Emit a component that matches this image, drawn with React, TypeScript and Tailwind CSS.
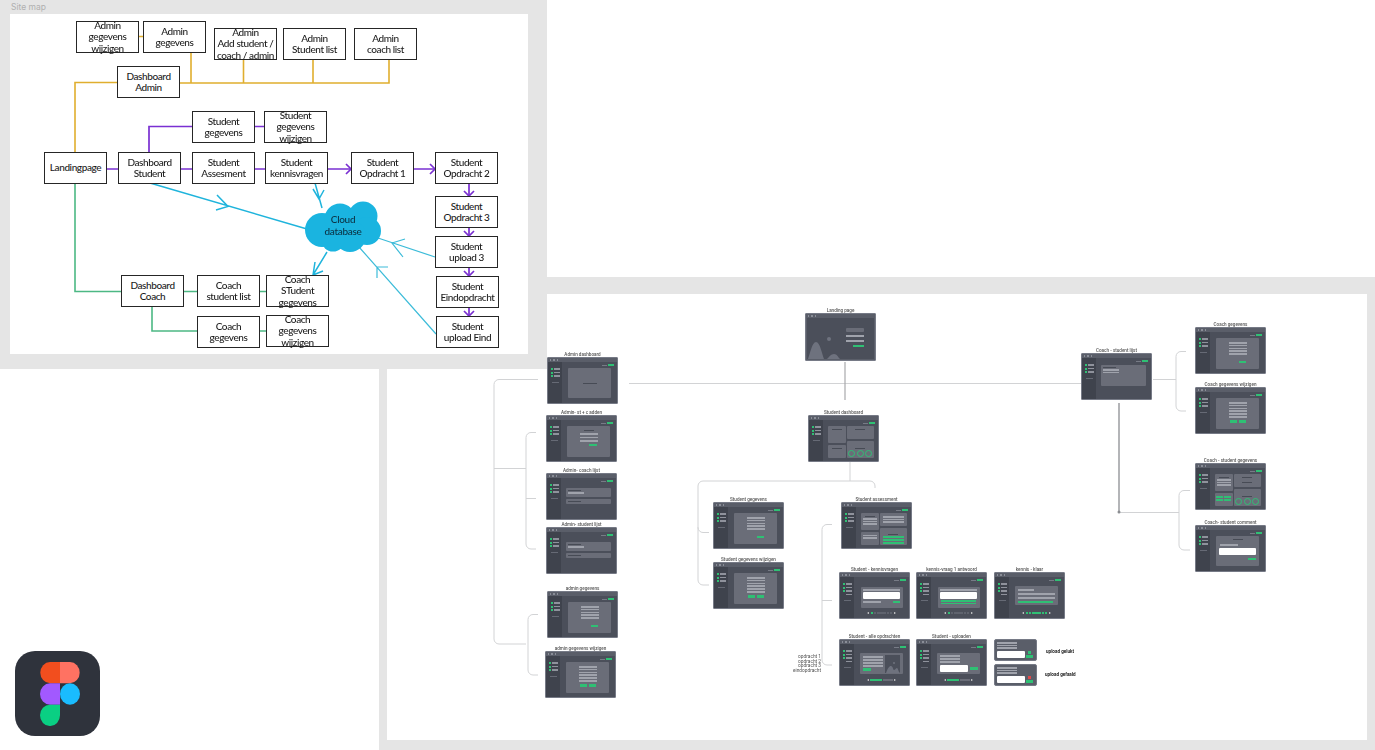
import React from "react";

const sans = "font-['Lato','Open_Sans',sans-serif]";

const boxes: { t: string[]; p: string }[] = [
  { t: ["Admin", "gegevens", "wijzigen"], p: "left-[76px] top-[21px]" },
  { t: ["Admin", "gegevens"], p: "left-[143px] top-[21px]" },
  { t: ["Admin", "Add student /", "coach / admin"], p: "left-[214px] top-[28px]" },
  { t: ["Admin", "Student list"], p: "left-[283px] top-[28px]" },
  { t: ["Admin", "coach list"], p: "left-[354px] top-[28px]" },
  { t: ["Dashboard", "Admin"], p: "left-[117px] top-[66px]" },
  { t: ["Student", "gegevens"], p: "left-[192px] top-[111px]" },
  { t: ["Student", "gegevens", "wijzigen"], p: "left-[264px] top-[111px]" },
  { t: ["Landingpage"], p: "left-[44px] top-[152px]" },
  { t: ["Dashboard", "Student"], p: "left-[118px] top-[152px]" },
  { t: ["Student", "Assesment"], p: "left-[192px] top-[152px]" },
  { t: ["Student", "kennisvragen"], p: "left-[265px] top-[152px]" },
  { t: ["Student", "Opdracht 1"], p: "left-[351px] top-[152px]" },
  { t: ["Student", "Opdracht 2"], p: "left-[435px] top-[152px]" },
  { t: ["Student", "Opdracht 3"], p: "left-[435px] top-[196px]" },
  { t: ["Student", "upload 3"], p: "left-[435px] top-[236px]" },
  { t: ["Student", "Eindopdracht"], p: "left-[436px] top-[276px]" },
  { t: ["Student", "upload Eind"], p: "left-[436px] top-[316px]" },
  { t: ["Dashboard", "Coach"], p: "left-[121px] top-[275px]" },
  { t: ["Coach", "student list"], p: "left-[197px] top-[275px]" },
  { t: ["Coach", "STudent", "gegevens"], p: "left-[266px] top-[275px]" },
  { t: ["Coach", "gegevens"], p: "left-[197px] top-[316px]" },
  { t: ["Coach", "gegevens", "wijzigen"], p: "left-[266px] top-[315px]" },
];

function Box({ t, p }: { t: string[]; p: string }) {
  return (
    <div
      className={`absolute ${p} w-[63px] h-[32px] border-[1.7px] border-[#262626] bg-white flex flex-col items-center justify-center text-[10px] leading-[11.3px] tracking-[-0.4px] font-medium text-[#1c1c1c] whitespace-nowrap ${sans}`}
    >
      {t.map((l) => (
        <span key={l}>{l}</span>
      ))}
    </div>
  );
}

/* primitives of the miniature screens */
const L = ({ c = "w-[18px]" }: { c?: string }) => <div className={`${c} h-[1.6px] bg-[#a0a3ac] shrink-0`} />;
const T = ({ c = "w-[10px]" }: { c?: string }) => <div className={`${c} h-[1px] bg-[#474b55] shrink-0`} />;
const G = ({ c = "w-[7px] h-[2.4px]" }: { c?: string }) => <div className={`${c} bg-[#2fc074] shrink-0`} />;
const W = ({ c = "w-[37px] h-[7px]" }: { c?: string }) => <div className={`${c} bg-white rounded-[1px] shrink-0`} />;
const P = ({ c, children }: { c: string; children?: React.ReactNode }) => (
  <div className={`${c} bg-[#6a6d78] rounded-[1px] shrink-0 flex flex-col`}>{children}</div>
);

function Pager({ green = 1, bar = false }: { green?: number; bar?: boolean }) {
  return (
    <div className="absolute bottom-[4px] left-0 right-0 flex items-center justify-center gap-[0.7px]">
      <div className="w-0 h-0 mr-[1px] border-y-[1.5px] border-y-transparent border-r-[2.2px] border-r-[#ddd]" />
      {bar ? (
        <>
          <div className="w-[11.500px] h-[2.500px] bg-[#2fc074]" />
          <div className="w-[10px] h-[2.500px] bg-[#6a6d78]" />
        </>
      ) : (
        Array.from({ length: 7 }).map((_, i) => (
          <div key={i} className={`w-[2.500px] h-[2.500px] ${i < green ? "bg-[#2fc074]" : "bg-[#5f636e]"}`} />
        ))
      )}
      <div className="w-0 h-0 ml-[1px] border-y-[1.5px] border-y-transparent border-l-[2.2px] border-l-[#ddd]" />
    </div>
  );
}

const Dots = () => (
  <div className="h-[4px] flex items-center gap-[2px] pl-[2px] shrink-0">
    <div className="w-[1.400px] h-[1.400px] bg-[#8a8e98]" />
    <div className="w-[1.400px] h-[1.400px] bg-[#8a8e98]" />
    <div className="w-[1.400px] h-[1.400px] bg-[#8a8e98]" />
  </div>
);

function Screen({
  label,
  pos,
  children,
  side = 3,
}: {
  label?: string;
  pos: string;
  children?: React.ReactNode;
  side?: number;
}) {
  return (
    <div className={`absolute ${pos} w-[71px] h-[47px] flex flex-col bg-[#5a5e69] border border-[#767a86] rounded-[1px]`}>
      {label && (
        <div className="absolute bottom-full mb-[1px] left-1/2 -translate-x-1/2 whitespace-nowrap text-[4.6px] leading-[5px] text-[#555] font-medium font-['Roboto',sans-serif]">
          {label}
        </div>
      )}
      <Dots />
      <div className="flex-1 flex min-h-0">
        <div className="w-[14px] bg-[#3f434d] flex flex-col pl-[3px] pt-[6px] gap-[1.6px] shrink-0">
          {[0, 1, 2].map((i) => (
            <div key={i} className="flex items-center gap-[1px]">
              <div className="w-[2px] h-[2px] bg-[#2fc074]" />
              <div className="w-[6px] h-[1.4px] bg-[#8f929c]" />
            </div>
          ))}
          {side > 3 && <div className="ml-[3px] w-[6px] h-[1.4px] bg-[#8f929c]" />}
          <div className="mt-[3px] ml-[1px] w-[7px] h-[1px] bg-[#666a75]" />
        </div>
        <div className="relative flex-1 bg-[#4b4f5a] flex flex-col min-w-0">
          <div className="h-[6px] flex items-center justify-end gap-[1px] pr-[3px] shrink-0">
            <div className="w-[5px] h-[1px] bg-[#777b86]" />
            <div className="w-[6px] h-[1.5px] bg-[#2fc074]" />
          </div>
          {children}
        </div>
      </div>
    </div>
  );
}

const Form = ({ edit }: { edit?: boolean }) => (
  <div className="flex justify-center">
    <P c="w-[43px] h-[31px] items-center pt-[4px] gap-[1.2px]">
      <L /><L /><L /><L /><L />
      {edit && <L />}
      {edit ? (
        <div className="flex gap-[2px] mt-[1.5px]">
          <G /><G />
        </div>
      ) : (
        <div className="w-full flex justify-center mt-[5px] pl-[10px]">
          <G />
        </div>
      )}
    </P>
  </div>
);

const Rings = () => (
  <div className="flex justify-center gap-[1.3px]">
    {[0, 1, 2].map((i) => (
      <div key={i} className="w-[7px] h-[7px] rounded-full border-[1.2px] border-[#2fc074]" />
    ))}
  </div>
);

const Dash = ({ l1, l2, r1, r2 }: { l1: React.ReactNode; l2: React.ReactNode; r1: React.ReactNode; r2: React.ReactNode }) => (
  <div className="flex justify-center gap-[1px]">
    <div className="flex flex-col gap-[1.5px]">
      <P c="w-[18px] h-[17px] items-center pt-[3px] gap-[1px]">{l1}</P>
      <P c="w-[18px] h-[13px] items-center pt-[3px] gap-[1px]">{l2}</P>
    </div>
    <div className="flex flex-col gap-[1.5px]">
      <P c="w-[27px] h-[13px] items-center pt-[3px] gap-[1px]">{r1}</P>
      <P c="w-[27px] h-[17px] items-center justify-end pb-[1px] gap-[1px]">{r2}</P>
    </div>
  </div>
);

const ListTwo = () => (
  <div className="flex flex-col gap-[2px] mt-[4px]">
    <P c="w-[45px] h-[9px] pl-[2px] pt-[2px] gap-[1px] mx-auto">
      <T c="w-[13px]" />
      <L c="w-[16px]" />
    </P>
    <P c="w-[45px] h-[5px] pl-[2px] pt-[2px] mx-auto">
      <T c="w-[13px]" />
    </P>
  </div>
);

const Small = ({ pos, red }: { pos: string; red?: boolean }) => (
  <div className={`absolute ${pos} w-[43px] h-[22px] bg-[#5a5e69] border border-[#767a86] rounded-[2px] flex flex-col pl-[2px] pt-[2px] gap-[1px]`}>
    <L c="w-[20px]" />
    <L c="w-[20px]" />
    <L c="w-[20px]" />
    <div className="flex items-end gap-[1px] mt-[1px]">
      <W c="w-[28px] h-[7px]" />
      <div className="flex flex-col items-center gap-[1px]">
        <div className={`w-[3px] h-[3px] ${red ? "bg-[#e04a4a]" : "bg-[#2fc074]"}`} />
        <G c="w-[7px] h-[2.5px]" />
      </div>
    </div>
  </div>
);

function Connectors() {
  return (
    <svg className="absolute left-0 top-0 w-[1375px] h-[750px]" viewBox="0 0 1375 750" fill="none">
      <g stroke="#d2d3d5" strokeWidth="1">
        <path d="M629 383.5H1081" />
        <path d="M538 379.5H499a5 5 0 0 0-5 5V639a5 5 0 0 0 5 5H526M494 468.5H526" />
        <path d="M536 432.5H531a5 5 0 0 0-5 5V544a5 5 0 0 0 5 5H536M526 498.5H536" />
        <path d="M538 614.5H533a5 5 0 0 0-5 5V670a5 5 0 0 0 5 5H538" />
        <path d="M850 462V481M709 532.5H703a5 5 0 0 1-5-5V486a5 5 0 0 1 5-5H870a5 5 0 0 1 5 5V488M698 527V580a5 5 0 0 0 5 5H709" />
        <path d="M832 524.5H827a5 5 0 0 0-5 5V660a5 5 0 0 0 5 5H832M822 600.5H832" />
        <path d="M1186 351.5H1181a5 5 0 0 0-5 5V406a5 5 0 0 0 5 5H1186M1153 379.5H1176" />
        <path d="M1119 512.5H1179M1190 490.5H1184a5 5 0 0 0-5 5V545a5 5 0 0 0 5 5H1190" />
      </g>
      <path d="M845 362V400" stroke="#a8a9ac" strokeWidth="1.2" />
      <path d="M1119 403V512" stroke="#9b9da1" strokeWidth="1.5" />
      <circle cx="1119" cy="512" r="1.5" fill="#8b8d91" />

      <g stroke="#e0ae2e" strokeWidth="1.6">
        <path d="M75 152V82.500H117M180 83H389V60M313 60V83M243.500 60V83M191 52V83M139 36.500H143" />
      </g>
      <g stroke="#7a30d2" strokeWidth="1.7">
        <path d="M106 169H118M149 152V126.500H192M255 126.500H264M181 169H192M255 169H265M327 169H351M413 169H435" />
        <path d="M469 184V196M469 227V236M469 268V276M469 308V316" />
        <path d="M346 164l5 5-5 5M430 164l5 5-5 5M464 191l5 5 5-5M464 231l5 5 5-5M464 271l5 5 5-5M464 311l5 5 5-5" />
      </g>
      <g stroke="#4cb884" strokeWidth="1.6">
        <path d="M75 184V291.500H121M184 291.500H197M260 291.500H266M152 307V331H197M260 331H266" />
      </g>
      <g stroke="#1fb4dc" strokeWidth="1.5">
        <path d="M150 183L307 229M217 195L228 206.500L216 210" />
        <path d="M315 183L322 208M313 189L319 199L324 190" />
        <path d="M327 252L313 275M315 262L313 275L323 271" />
      </g>
      <g stroke="#3dbcd9" strokeWidth="1.2">
        <path d="M435 257L378 238M405 239L392 243L403 257" />
        <path d="M436 334L359 247M388 267H377V278" />
      </g>
      <g fill="#1ab4e0">
        <circle cx="322" cy="230" r="17" />
        <circle cx="340" cy="219" r="15.500" />
        <circle cx="363" cy="216" r="14.500" />
        <circle cx="367" cy="231" r="14" />
        <circle cx="350" cy="236" r="16" />
        <circle cx="333" cy="240" r="11.500" />
      </g>
    </svg>
  );
}

function FigmaIcon() {
  return (
    <div className="absolute left-[15px] top-[651px] w-[85px] h-[85px] rounded-[20px] bg-[#2f333c] flex items-center justify-center">
      <svg className="w-[40px] h-[64px] ml-[4px]" viewBox="0 0 40 64">
        <path fill="#f24e1e" d="M20 0H10A10 10.670 0 0 0 10 21.330H20Z" />
        <path fill="#ff7262" d="M20 0h10A10 10.670 0 0 1 30 21.330H20Z" />
        <path fill="#a259ff" d="M20 21.330H10A10 10.670 0 0 0 10 42.670H20Z" />
        <ellipse fill="#1abcfe" cx="30" cy="32" rx="10" ry="10.670" />
        <path fill="#0acf83" d="M10 42.670H20V53.330A10 10.670 0 1 1 10 42.670Z" />
      </svg>
    </div>
  );
}

export default function App() {
  return (
    <div className="relative w-[1375px] h-[750px] overflow-hidden bg-white">
      <div className="absolute left-[379px] top-[277px] w-[996px] h-[473px] bg-[#e5e5e5] pl-[8px] pt-[17px] pr-[8px] pb-[10px]">
        <div className="w-full h-full bg-white" />
      </div>
      <div className="absolute left-0 top-0 w-[547px] h-[369px] bg-[#e5e5e5] pl-[10px] pr-[19px] pt-[14px] pb-[15px]">
        <div className="w-full h-full bg-white" />
        <div className="absolute left-[11px] top-[2px] text-[8.500px] leading-[11px] text-[#b0b0b0] font-['Inter',sans-serif]">Site map</div>
      </div>

      <div className="absolute inset-0 blur-[0.45px]">
        <Connectors />

        {boxes.map((b) => (
          <Box key={b.t.join() + b.p} {...b} />
        ))}
        <div className={`absolute left-[318px] top-[214px] w-[50px] flex flex-col items-center text-[10px] leading-[11.500px] tracking-[-0.3px] font-medium text-[#0c3345] ${sans}`}>
          <span>Cloud</span>
          <span>database</span>
        </div>

        <div className="absolute left-[805px] top-[313px] w-[71px] h-[48px] bg-[#5a5e69] border border-[#767a86] rounded-[1px] flex flex-col">
          <div className="absolute bottom-full mb-[1px] left-1/2 -translate-x-1/2 whitespace-nowrap text-[4.6px] leading-[5px] text-[#555] font-medium font-['Roboto',sans-serif]">Landing page</div>
          <Dots />
          <div className="flex-1 mx-[1px] mb-[1px] bg-[#4b4f5a] flex justify-between items-end">
            <svg className="w-[36px] h-[33px]" viewBox="0 0 36 33">
              <path fill="#6e727e" d="M1 33C3 28 5 16 9 16S15 28 17 33ZM20 33C22 31 24 28 27 28S31 31 33 33Z" />
              <circle cx="22" cy="13" r="2" fill="#6e727e" />
            </svg>
            <div className="flex flex-col items-end gap-[3px] pr-[10px] pb-[12px]">
              <P c="w-[18px] h-[4.500px]" />
              <L />
              <L />
              <G c="w-[11px] h-[2.500px]" />
            </div>
          </div>
        </div>

        <Screen label="Admin dashboard" pos="left-[547px] top-[357px]">
          <div className="flex justify-center"><P c="w-[43px] h-[30px] items-center justify-center"><T c="w-[14px]" /></P></div>
        </Screen>
        <Screen label="Admin- st + c adden" pos="left-[546px] top-[415px]">
          <div className="flex justify-center">
            <P c="w-[43px] h-[31px] items-center pt-[4px] gap-[2px]">
              <T /><L /><L /><L />
              <div className="w-full flex justify-center pl-[8px]"><G c="w-[8px] h-[2.500px]" /></div>
            </P>
          </div>
        </Screen>
        <Screen label="Admin- coach lijst" pos="left-[546px] top-[473px]"><ListTwo /></Screen>
        <Screen label="Admin- student lijst" pos="left-[546px] top-[527px]"><ListTwo /></Screen>
        <Screen label="admin gegevens" pos="left-[547px] top-[591px]"><Form /></Screen>
        <Screen label="admin gegevens wijzigen" pos="left-[545px] top-[651px]"><Form edit /></Screen>

        <Screen label="Student dashboard" pos="left-[808px] top-[415px]">
          <Dash l1={<T />} l2={<T />} r1={<T />} r2={<><T /><Rings /></>} />
        </Screen>
        <Screen label="Student gegevens" pos="left-[713px] top-[502px]"><Form /></Screen>
        <Screen label="Student gegevens wijzigen" pos="left-[713px] top-[562px]"><Form edit /></Screen>
        <Screen label="Student assessment" pos="left-[841px] top-[502px]">
          <Dash
            l1={<><T /><L c="w-[14px]" /><L c="w-[14px]" /><L c="w-[14px]" /></>}
            l2={<><L c="w-[14px]" /><L c="w-[14px]" /></>}
            r1={<><L c="w-[21px]" /><L c="w-[21px]" /><L c="w-[21px]" /></>}
            r2={<><T /><G c="w-[21px] h-[2px]" /><G c="w-[21px] h-[2px]" /><G c="w-[21px] h-[2px]" /></>}
          />
        </Screen>

        <Screen label="Student - kennisvragen" pos="left-[839px] top-[572px]" side={4}>
          <div className="flex justify-center">
            <P c="w-[42px] h-[21px] items-center pt-[2px] gap-[1.500px] mt-[4px]">
              <L c="w-[37px]" />
              <W />
              <div className="flex w-[37px] items-center justify-between"><L c="w-[18px]" /><G /></div>
            </P>
          </div>
          <Pager />
        </Screen>
        <Screen label="kennis-vraag 1 antwoord" pos="left-[916px] top-[572px]" side={4}>
          <div className="flex justify-center">
            <P c="w-[42px] h-[21px] items-center pt-[2px] gap-[1.200px] mt-[4px]">
              <L c="w-[37px]" />
              <W />
              <G c="w-[35px] h-[1.600px]" />
              <G c="w-[35px] h-[1.600px]" />
            </P>
          </div>
          <Pager />
        </Screen>
        <Screen label="kennis - klaar" pos="left-[994px] top-[572px]" side={4}>
          <div className="flex justify-center">
            <P c="w-[43px] h-[19px] pl-[3px] pt-[3px] gap-[2.500px] mt-[3px]">
              <L c="w-[16px]" />
              <L c="w-[37px]" />
              <L c="w-[37px]" />
              <G c="w-[35px] h-[1.600px]" />
            </P>
          </div>
          <Pager green={7} />
        </Screen>
        <Screen label="Student - alle opdrachten" pos="left-[839px] top-[639px]" side={4}>
          <div className="flex justify-center">
            <P c="w-[43px] h-[21px] mt-[3px] flex-row! items-center justify-between px-[3px]">
              <div className="flex flex-col gap-[1.500px]">
                <L c="w-[20px]" /><L c="w-[20px]" /><L c="w-[20px]" /><L c="w-[20px]" /><G c="w-[8px] h-[2.500px]" />
              </div>
              <svg className="w-[15px] h-[18px]" viewBox="0 0 15 18">
                <rect width="15" height="18" fill="#4b4f5a" />
                <path fill="#6e727e" d="M1 18C3 13 4 11 6 11S8 15 9 15S11 13 12 13S13 16 15 18Z" />
                <circle cx="9" cy="8" r="1" fill="#6e727e" />
              </svg>
            </P>
          </div>
          <Pager bar />
        </Screen>
        <Screen label="Student - uploaden" pos="left-[916px] top-[639px]" side={4}>
          <div className="flex justify-center">
            <P c="w-[43px] h-[21px] mt-[3px] pl-[3px] pt-[2px] gap-[1.500px]">
              <L c="w-[20px]" /><L c="w-[20px]" /><L c="w-[20px]" />
              <div className="flex items-center gap-[2px] mt-[1px]"><W c="w-[28px] h-[7px]" /><G c="w-[8px] h-[3px]" /></div>
            </P>
          </div>
          <Pager bar />
        </Screen>
        <Small pos="left-[994px] top-[639px]" />
        <Small pos="left-[994px] top-[664px]" red />
        <div className="absolute left-[1046px] top-[649px] text-[4.600px] leading-[5px] font-bold text-[#222] whitespace-nowrap font-['Roboto',sans-serif]">upload gelukt</div>
        <div className="absolute left-[1045px] top-[672px] text-[4.600px] leading-[5px] font-bold text-[#222] whitespace-nowrap font-['Roboto',sans-serif]">upload gefaald</div>
        <div className="absolute left-[782px] top-[655px] w-[39px] text-right text-[4.800px] leading-[4.500px] text-[#555] font-['Roboto',sans-serif]">
          <div>opdracht 1</div>
          <div>opdracht 2</div>
          <div>opdracht 3</div>
          <div>eindopdracht</div>
        </div>

        <Screen label="Coach - student lijst" pos="left-[1081px] top-[353px]">
          <div className="flex justify-center mt-[1px]">
            <P c="w-[45px] h-[21px] pl-[2px] pt-[2px] gap-[1px]">
              <T c="w-[13px]" /><L c="w-[16px]" /><L c="w-[16px]" />
            </P>
          </div>
        </Screen>
        <Screen label="Coach gegevens" pos="left-[1195px] top-[327px]"><Form /></Screen>
        <Screen label="Coach gegevens wijzigen" pos="left-[1195px] top-[387px]"><Form edit /></Screen>
        <Screen label="Coach - student gegevens" pos="left-[1195px] top-[463px]">
          <Dash
            l1={<><T /><L c="w-[14px]" /><L c="w-[14px]" /><L c="w-[14px]" /></>}
            l2={<div className="grid grid-cols-2 gap-[1px]"><G /><G /><G /><G /></div>}
            r1={<><T /><div className="h-[2px]" /><T /></>}
            r2={<><T /><Rings /></>}
          />
        </Screen>
        <Screen label="Coach- student comment" pos="left-[1195px] top-[525px]">
          <div className="flex justify-center">
            <P c="w-[43px] h-[30px] items-center pt-[3px] gap-[2px]">
              <T />
              <div className="w-[36px] mt-[2px]"><L c="w-[18px]" /></div>
              <W />
              <div className="w-[36px] flex justify-end mt-[1px]"><G c="w-[8px] h-[2.500px]" /></div>
            </P>
          </div>
        </Screen>

        <FigmaIcon />
      </div>
    </div>
  );
}
